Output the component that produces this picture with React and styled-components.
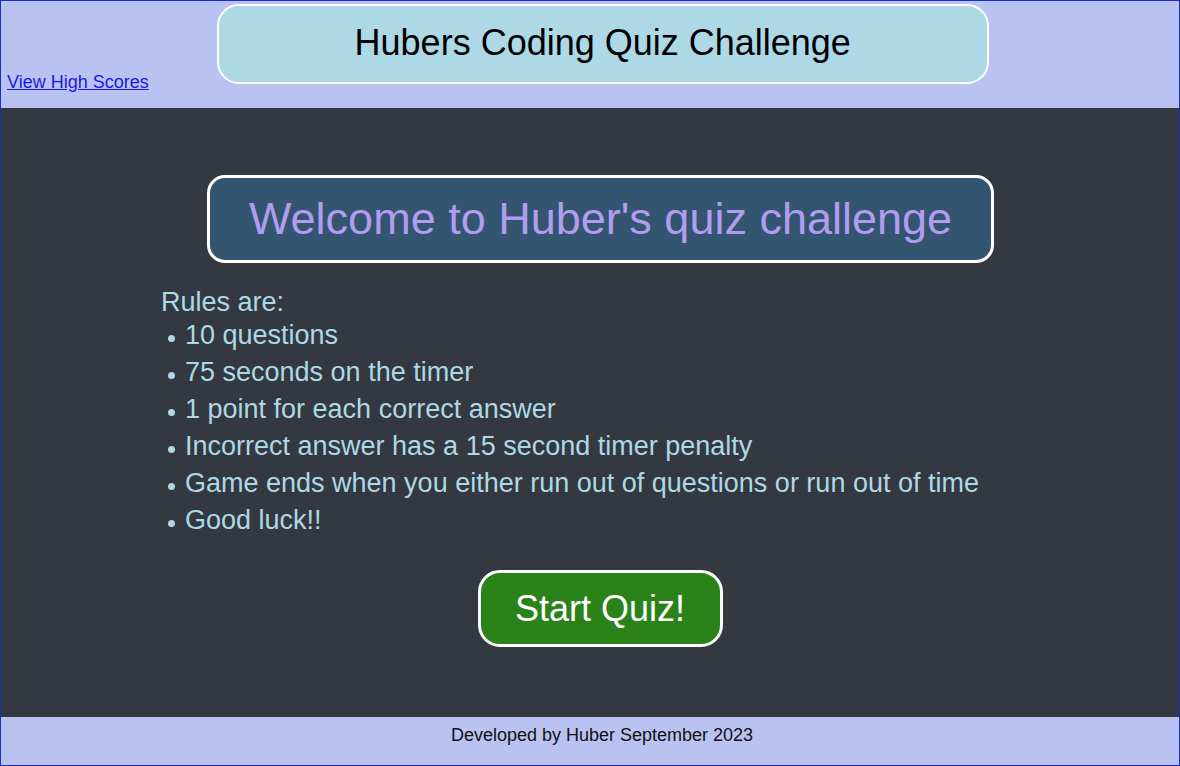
import React from 'react'
import styled, { createGlobalStyle } from 'styled-components'

const GlobalStyle = createGlobalStyle`
  html, body {
    margin: 0;
    padding: 0;
  }
  body {
    font-family: "Liberation Sans", Arial, sans-serif;
  }
`

const Page = styled.div`
  box-sizing: border-box;
  height: 766px;
  border: 1px solid #1a2bd2;
  display: flex;
  flex-direction: column;
`

const Header = styled.header`
  height: 107px;
  background: #bac2f1;
  display: flex;
  align-items: flex-start;
`

const ScoresLink = styled.a`
  align-self: flex-end;
  margin: 0 0 15px 6px;
  font-size: 18px;
  color: #1a1ae6;
  text-decoration: underline;
  white-space: nowrap;
`

const TitleBox = styled.div`
  box-sizing: border-box;
  margin: 3px 0 0 68px;
  width: 772px;
  height: 80px;
  background: #add8e6;
  border: 2px solid #fff;
  border-radius: 22px;
  display: flex;
  align-items: center;
  justify-content: center;
  padding-bottom: 2px;

  h1 {
    margin: 0;
    font-size: 36px;
    font-weight: 400;
    color: #000;
  }
`

const Main = styled.main`
  flex: 1;
  background: #343841;
  padding-top: 67px;
`

const Welcome = styled.div`
  box-sizing: border-box;
  margin-left: 206px;
  width: 787px;
  height: 88px;
  background: #34556f;
  border: 3px solid #fff;
  border-radius: 18px;
  display: flex;
  align-items: center;
  justify-content: center;

  h2 {
    margin: 0;
    font-size: 45px;
    font-weight: 400;
    color: #b29cf1;
  }
`

const Rules = styled.div`
  margin: 24px 0 0 160px;
  color: #add8e6;
  font-size: 27px;
`

const RulesTitle = styled.p`
  margin: 0;
  line-height: 30px;
`

const List = styled.ul`
  list-style: none;
  margin: 0;
  padding: 0;
`

const Item = styled.li`
  display: flex;
  align-items: center;
  height: 37px;

  &::before {
    content: '';
    width: 7px;
    height: 7px;
    border-radius: 50%;
    background: #add8e6;
    margin: 5px 10px 0 7px;
  }
`

const ButtonRow = styled.div`
  display: flex;
  justify-content: center;
  margin: 31px 0 0 20px;
`

const StartButton = styled.button`
  box-sizing: border-box;
  width: 245px;
  height: 77px;
  background: #2a8219;
  border: 3px solid #fff;
  border-radius: 22px;
  color: #fff;
  font-family: "Liberation Sans", Arial, sans-serif;
  font-size: 36px;
  cursor: pointer;
`

const Footer = styled.footer`
  height: 48px;
  background: #bac2f1;
  text-align: center;
  font-size: 18px;
  color: #111;
  padding: 8px 0 0 24px;
  box-sizing: border-box;
`

const rules = [
  '10 questions',
  '75 seconds on the timer',
  '1 point for each correct answer',
  'Incorrect answer has a 15 second timer penalty',
  'Game ends when you either run out of questions or run out of time',
  'Good luck!!',
]

export default function App() {
  return (
    <Page>
      <GlobalStyle />
      <Header>
        <ScoresLink href="#">View High Scores</ScoresLink>
        <TitleBox>
          <h1>Hubers Coding Quiz Challenge</h1>
        </TitleBox>
      </Header>
      <Main>
        <Welcome>
          <h2>Welcome to Huber's quiz challenge</h2>
        </Welcome>
        <Rules>
          <RulesTitle>Rules are:</RulesTitle>
          <List>
            {rules.map(r => (
              <Item key={r}>{r}</Item>
            ))}
          </List>
        </Rules>
        <ButtonRow>
          <StartButton>Start Quiz!</StartButton>
        </ButtonRow>
      </Main>
      <Footer>Developed by Huber September 2023</Footer>
    </Page>
  )
}
